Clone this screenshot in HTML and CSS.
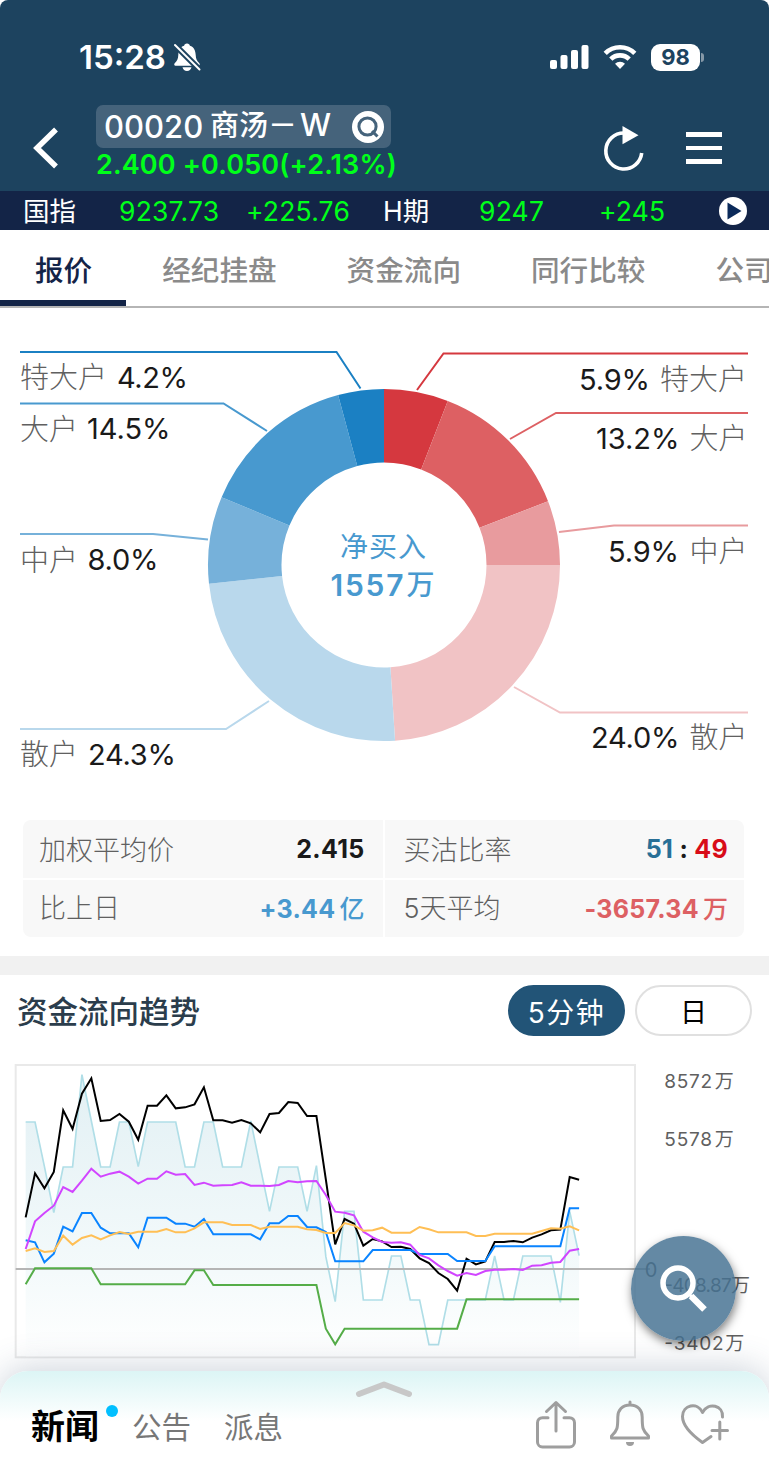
FILE: index.html
```html
<!DOCTYPE html>
<html lang="zh-Hans">

<head>
    <meta charset="utf-8">
    <meta name="viewport" content="width=device-width, initial-scale=1.0" />
    <title>00020 商汤－W</title>
    <link rel="stylesheet" href="styles.css">
</head>

<body>
    <header class="top">
        <div class="status">
            <span class="time">15:28</span>
            <svg class="mute" width="28" height="30" viewBox="0 0 28 30">
                <path fill="#fff" d="M14 1.5c-1.800 0-2.600 1-2.900 2.200C7 5 5.500 8.500 5.300 13c-.2 4-1.200 6-3.600 8.300-.9.900-.5 2.400.8 2.400h23c1.300 0 1.700-1.500.8-2.400-2.400-2.300-3.400-4.300-3.600-8.300-.2-4.500-1.700-8-5.800-9.300-.3-1.200-1.100-2.200-2.900-2.200zM9.500 25.300h9c-.5 2.200-2.200 3.700-4.500 3.700s-4-1.500-4.500-3.700z" />
                <path stroke="#1d435f" stroke-width="6" d="M1 2l26 26" />
                <path stroke="#fff" stroke-width="2" stroke-linecap="round" d="M2 3l24.500 24.500" />
            </svg>
            <div class="status-right">
                <svg width="39" height="26" viewBox="0 0 39 26" fill="#fff">
                    <rect x="0" y="16" width="7" height="9" rx="2" />
                    <rect x="10.500" y="11" width="7" height="14" rx="2" />
                    <rect x="21" y="6" width="7" height="19" rx="2" />
                    <rect x="31.500" y="1" width="7" height="24" rx="2" />
                </svg>
                <svg width="34" height="26" viewBox="0 0 34 26" fill="none" stroke="#fff" stroke-width="4.600">
                    <path d="M2.200 9.300a21 21 0 0 1 29.600 0" />
                    <path d="M7.800 15.200a13 13 0 0 1 18.400 0" />
                    <path fill="#fff" stroke="none" d="M17 25l-5-5.200a7 7 0 0 1 10 0z" />
                </svg>
                <div class="battery">98</div>
            </div>
        </div>
        <div class="stock">
            <svg class="back" width="26" height="42" viewBox="0 0 26 42" fill="none" stroke="#fff" stroke-width="5.500">
                <path d="M23 2.500L4 21l19 18.500" />
            </svg>
            <div class="quote">
                <div class="name">
                    <span class="code">00020</span><span class="cname">商汤－<i>W</i></span>
                    <svg width="32" height="32" viewBox="0 0 32 32">
                        <circle cx="16" cy="16" r="16" fill="#fff" />
                        <circle cx="15.500" cy="15.500" r="8.600" fill="none" stroke="#45637b" stroke-width="3" />
                        <path stroke="#45637b" stroke-width="3" d="M20 20l5.500 5.500" />
                    </svg>
                </div>
                <div class="price">2.400 +0.050(+2.13%)</div>
            </div>
            <svg class="refresh" width="42" height="48" viewBox="0 0 42 48">
                <path fill="none" stroke="#fff" stroke-width="3.600" d="M21 8A18 18 0 1 0 38.700 28" />
                <path fill="#fff" d="M19.500 1l16 9.300-16 9z" />
            </svg>
            <div class="menu"><i></i><i></i><i></i></div>
        </div>
    </header>

    <div class="ticker">
        <span class="t1">国指</span>
        <span class="t2 up">9237.73</span>
        <span class="t3 up">+225.76</span>
        <span class="t4">H期</span>
        <span class="t5 up">9247</span>
        <span class="t6 up">+245</span>
        <svg width="28" height="28" viewBox="0 0 28 28">
            <circle cx="14" cy="14" r="14" fill="#fff" />
            <path fill="#0b2a5a" d="M8.500 5.500l14 8.500-14 8.500z" />
        </svg>
    </div>

    <nav class="tabs">
        <a class="on">报价</a>
        <a>经纪挂盘</a>
        <a>资金流向</a>
        <a>同行比较</a>
        <a>公司</a>
    </nav>

    <section class="flow">
        <svg class="donut" width="769" height="512" viewBox="0 308 769 512">
            <g id="ring" fill="none" stroke-width="73.500"></g>
            <g fill="none" stroke-width="2">
                <path stroke="#1b80c3" d="M20 352H336.500L360.500 388.500" />
                <path stroke="#4899cf" d="M20 403.500H223.500L267 431" />
                <path stroke="#76b1da" d="M20 534H153L208 539.500" />
                <path stroke="#b9d8ec" d="M20 729H226L269 701" />
                <path stroke="#d5383f" d="M748 353.500H443.500L417 390" />
                <path stroke="#dd6063" d="M748 413H556L510 439" />
                <path stroke="#e89b9e" d="M748 525.500H614L559 532" />
                <path stroke="#f1c3c5" d="M748 712.500H560L514 687" />
            </g>
            <g class="label">
                <text x="20" y="388">特大户</text>
                <text x="20" y="439.500">大户</text>
                <text x="20" y="570.500">中户</text>
                <text x="20" y="765">散户</text>
                <text x="660" y="390">特大户</text>
                <text x="689.500" y="449">大户</text>
                <text x="689.500" y="562">中户</text>
                <text x="689.500" y="748">散户</text>
            </g>
            <g class="pct">
                <text x="117" y="387.500" textLength="71">4.2%</text>
                <text x="87" y="439" textLength="83.500">14.5%</text>
                <text x="87.500" y="570" textLength="71">8.0%</text>
                <text x="88" y="764.500" textLength="88">24.3%</text>
                <text x="579" y="389.500" textLength="71">5.9%</text>
                <text x="596" y="448.500" textLength="83.500">13.2%</text>
                <text x="608" y="561.500" textLength="71">5.9%</text>
                <text x="591" y="747.500" textLength="88.500">24.0%</text>
            </g>
            <g class="net">
                <text x="340" y="557" textLength="86">净买入</text>
                <text class="num" x="330.500" y="595.500" textLength="73">1557</text>
                <text class="wan" x="406.500" y="595">万</text>
            </g>
        </svg>

        <div class="stats">
            <div><span>加权平均价</span><b>2.415</b></div>
            <div><span>买沽比率</span><b><em class="buy">51</em> : <em class="sell">49</em></b></div>
            <div><span>比上日</span><b class="blue">+3.44<small>亿</small></b></div>
            <div><span>5天平均</span><b class="red">-3657.34<small>万</small></b></div>
        </div>
    </section>

    <section class="trend">
        <div class="trend-head">
            <h2>资金流向趋势</h2>
            <button class="pill on">5分钟</button>
            <button class="pill">日</button>
        </div>
        <svg class="chart" width="769" height="320" viewBox="0 0 2307 960">
            <defs>
                <linearGradient id="area" gradientUnits="userSpaceOnUse" x1="0" y1="70" x2="0" y2="922">
                    <stop offset="0" stop-color="#e2f0f4" />
                    <stop offset=".7" stop-color="#f4fafb" />
                    <stop offset="1" stop-color="#fff" />
                </linearGradient>
            </defs>
            <rect x="47" y="45" width="1858" height="877" fill="none" stroke="#e9e9e9" stroke-width="6" />
            <g id="lines" fill="none" stroke-width="6" stroke-linejoin="miter"></g>
            <g class="axis">
                <text x="1993" y="114" textLength="143">8572</text><text x="2144" y="114">万</text>
                <text x="1993" y="288" textLength="143">5578</text><text x="2144" y="288">万</text>
                <text class="zero" x="1934" y="680">0</text>
                <text x="1993" y="725" textLength="202">-408.87</text><text x="2193" y="725">万</text>
                <text x="1993" y="900" textLength="178">-3402</text><text x="2176" y="900">万</text>
            </g>
        </svg>
    </section>

    <button class="find">
        <svg width="50" height="50" viewBox="0 0 50 50" fill="none" stroke="#fff">
            <circle cx="19" cy="19" r="15" stroke-width="5.500" />
            <path stroke-width="3" d="M29 29l5 5" />
            <path stroke-width="6.500" d="M32 32l13.500 13.500" />
        </svg>
    </button>

    <footer class="sheet">
        <svg class="grip" width="58" height="18" viewBox="0 0 58 18" fill="none" stroke="#c8c8c8" stroke-width="6" stroke-linecap="round" stroke-linejoin="round">
            <path d="M4 14l25-9.500L54 14" />
        </svg>
        <div class="news">
            <a class="on">新闻</a>
            <a>公告</a>
            <a>派息</a>
        </div>
        <div class="tools">
            <svg width="42" height="50" viewBox="0 0 42 50">
                <path d="M13 18.700H7.500a5 5 0 0 0-5 5V43a5 5 0 0 0 5 5h27a5 5 0 0 0 5-5V23.700a5 5 0 0 0-5-5H29M21 32V4M11.500 12.500L21 3.500l9.500 9" />
            </svg>
            <svg width="42" height="50" viewBox="0 0 42 50">
                <path d="M21 3v3M21 6C13 6 8.800 11.500 8.800 18c0 11-.3 13.500-6.300 19v2h37v-2c-6-5.500-6.300-8-6.300-19C33.200 11.500 29 6 21 6z" />
                <path fill="#9e9e9e" stroke="none" d="M17 43h8a4 4 0 0 1-8 0z" />
            </svg>
            <svg width="50" height="50" viewBox="0 0 50 50">
                <path d="M31 37.500L22.500 43.500C12 36 2.500 27 2.500 17.500c0-11.500 15-15 20-4 6-11 21-7 20 4.500M32 31.500h15.500M39.800 23v17" />
            </svg>
        </div>
    </footer>

    <script>
        // 环图，从顶部顺时针
        var parts = [
            [5.9, '#d5383f'], [13.2, '#dd6063'], [5.9, '#e89b9e'], [24.0, '#f1c3c5'],
            [24.3, '#b9d8ec'], [8.0, '#76b1da'], [14.5, '#4899cf'], [4.2, '#1b80c3']
        ];

        function at(percent) {
            var a = percent / 100 * Math.PI * 2;
            return (384 + 139.25 * Math.sin(a)).toFixed(2) + ' ' + (565 - 139.25 * Math.cos(a)).toFixed(2);
        }
        var ring = '';
        var start = 0;
        parts.forEach(function (p) {
            ring += '<path stroke="' + p[1] + '" d="M' + at(start) + 'A139.25 139.25 0 0 1 ' + at(start + p[0]) + '"/>';
            start += p[0];
        });
        document.getElementById('ring').innerHTML = ring;

        // 走势，每5分钟一点
        var price = [216, 216, 350, 488, 351, 351, 74, 213, 351, 351, 216, 216, 350, 216, 216, 216, 216, 351, 351, 216,
            216, 351, 351, 351, 213, 350, 484, 351, 351, 351, 484, 347, 620, 755, 484, 484, 750, 750, 750, 618,
            618, 750, 750, 884, 884, 750, 750, 750, 750, 750, 618, 750, 750, 618, 618, 618, 618, 757, 484, 617];
        var total = [502, 370, 415, 366, 181, 237, 131, 85, 213, 210, 192, 215, 269, 167, 167, 136, 175, 172, 163, 112,
            211, 211, 218, 210, 220, 247, 192, 189, 156, 159, 198, 198, 388, 583, 507, 521, 587, 567, 574, 591,
            590, 597, 625, 639, 669, 687, 722, 626, 643, 634, 576, 576, 573, 577, 563, 553, 541, 539, 381, 389];
        var big = [571, 577, 637, 611, 530, 544, 489, 489, 533, 550, 550, 550, 592, 503, 503, 503, 521, 521, 530, 507,
            553, 553, 553, 553, 553, 568, 520, 520, 498, 498, 531, 532, 546, 634, 634, 634, 634, 600, 600, 600,
            600, 600, 612, 612, 612, 612, 633, 633, 633, 633, 589, 589, 589, 589, 589, 589, 589, 589, 475, 475];
        var small = [597, 514, 489, 467, 411, 426, 392, 356, 380, 371, 365, 380, 401, 386, 386, 364, 374, 372, 405, 398,
            407, 406, 405, 397, 407, 407, 408, 405, 393, 397, 394, 393, 435, 485, 488, 496, 545, 562, 576, 578,
            577, 584, 615, 625, 646, 663, 677, 669, 675, 663, 659, 659, 657, 660, 647, 646, 638, 636, 602, 597];
        var mid = [603, 595, 606, 603, 557, 584, 564, 556, 568, 556, 546, 552, 545, 545, 545, 537, 547, 547, 535, 517,
            517, 517, 525, 525, 525, 537, 530, 530, 530, 530, 538, 540, 549, 549, 519, 526, 542, 541, 533, 548,
            548, 548, 531, 538, 547, 547, 547, 547, 558, 558, 551, 551, 551, 551, 551, 543, 535, 536, 529, 541];
        var huge = [703, 655, 655, 655, 655, 655, 655, 655, 703, 703, 703, 703, 703, 703, 703, 703, 703, 703, 661, 661,
            705, 705, 705, 705, 705, 705, 705, 705, 705, 705, 705, 705, 836, 883, 836, 836, 836, 836, 836, 836,
            836, 836, 836, 836, 836, 836, 836, 748, 748, 748, 748, 748, 748, 748, 748, 748, 748, 748, 748, 748];

        function points(arr) {
            return arr.map((y, i) => (77 + i * 28.14).toFixed(1) + ',' + y).join(' ');
        }
        function line(arr, color) {
            return '<polyline stroke="' + color + '" points="' + points(arr) + '"/>';
        }
        document.getElementById('lines').innerHTML =
            '<polygon fill="url(#area)" points="77,919 ' + points(price) + ' 1737,919"/>' +
            line(price, '#b0dee7').replace('<polyline', '<polyline stroke-width="5"') +
            '<path stroke="#b5b5b5" d="M47 657H1950"/>' +
            line(total, '#000') + line(big, '#0a84ff') + line(small, '#d145ff') +
            line(mid, '#ffbf55') + line(huge, '#55ad48');
    </script>
</body>

</html>
```
FILE: styles.css
```css
* {
    box-sizing: border-box;
}

body {
    position: relative;
    margin: 0;
    height: 1463px;
    overflow: hidden;
    background: #fff;
    font-family: Inter, "Noto Sans CJK SC", sans-serif;
    color: #222;
}

svg {
    display: block;
    flex: none;
}

button {
    border: none;
    padding: 0;
    font-family: inherit;
}

/* 顶部 */
.top {
    height: 191px;
    background: #1d435f;
    border-radius: 8px 8px 0 0;
    color: #fff;
}

.status {
    display: flex;
    align-items: center;
    height: 105px;
    padding: 9px 69px 0 79px;
}

.time {
    width: 94px;
    font-size: 33px;
    font-weight: 600;
    white-space: nowrap;
}

.status-right {
    display: flex;
    align-items: center;
    gap: 14px;
    margin-left: auto;
}

.battery {
    position: relative;
    width: 49px;
    height: 27px;
    border-radius: 9px;
    background: #fff;
    color: #1d435f;
    font-size: 22px;
    line-height: 27px;
    font-weight: 700;
    text-align: center;
}

.battery::after {
    content: "";
    position: absolute;
    right: -4px;
    top: 9px;
    width: 3px;
    height: 9px;
    border-radius: 0 3px 3px 0;
    background: #8598a7;
}

.stock {
    display: flex;
    height: 86px;
    padding-left: 33px;
}

.back {
    margin-top: 22px;
}

.quote {
    width: 310px;
    margin-left: 37px;
}

.name {
    display: flex;
    align-items: center;
    width: 295px;
    height: 43px;
    padding: 0 7px 0 8px;
    border-radius: 7px;
    background: #45637b;
    font-size: 29px;
    line-height: 40px;
    font-weight: 500;
    white-space: nowrap;
}

.code {
    width: 106px;
    font-size: 31px;
}

.cname {
    padding-bottom: 3px;
}

.cname i {
    margin-left: 3px;
    font-size: 31px;
    font-style: normal;
}

.name svg {
    margin-left: auto;
}

.price {
    height: 34px;
    line-height: 34px;
    font-size: 27px;
    font-weight: 600;
    letter-spacing: .15px;
    color: #00ff1a;
    white-space: nowrap;
}

.refresh {
    margin: 20px 0 0 197px;
}

.menu {
    display: flex;
    flex-direction: column;
    gap: 9px;
    margin: 27px 0 0 41px;
}

.menu i {
    width: 36px;
    height: 4.500px;
    background: #fff;
}

/* 指数 */
.ticker {
    display: flex;
    align-items: center;
    height: 39px;
    padding-left: 23px;
    background: #132447;
    color: #fff;
    font-size: 26.500px;
    line-height: 36px;
    white-space: nowrap;
}

.ticker .up {
    padding-top: 1px;
    letter-spacing: .2px;
    color: #00ff1a;
}

.t1 {
    width: 96px;
}

.t2 {
    width: 127px;
}

.t3 {
    width: 137px;
}

.t4 {
    width: 96px;
}

.t5 {
    width: 120px;
}

.t6 {
    width: 120px;
}

/* 标签 */
.tabs {
    display: flex;
    gap: 70px;
    height: 78px;
    padding-left: 35px;
    border-bottom: 2px solid #b5b5b5;
    overflow: hidden;
    font-size: 28.600px;
    line-height: 81px;
    font-weight: 500;
    color: #8a8a8a;
    white-space: nowrap;
}

.tabs .on {
    position: relative;
    color: #132447;
}

.tabs .on::after {
    content: "";
    position: absolute;
    left: -35px;
    top: 70px;
    width: 126px;
    height: 6px;
    background: #132447;
}

/* 资金分布 */
.label {
    font-size: 29px;
    font-weight: 300;
    fill: #606060;
}

.pct {
    font-size: 29px;
    fill: #1a1a1a;
}

.net {
    font-size: 28px;
    fill: #4899cf;
}

.net .num {
    font-size: 30px;
    font-weight: 600;
}

.net .wan {
    font-size: 28px;
    font-weight: 500;
}

.stats {
    display: grid;
    grid-template-columns: 1fr 1fr;
    gap: 2px;
    width: 721px;
    margin: 0 0 19px 23px;
    border-radius: 8px;
    overflow: hidden;
}

.stats div {
    display: flex;
    align-items: center;
    justify-content: space-between;
    height: 57.500px;
    padding: 0 16px 0 16px;
    background: #f8f8f8;
}

.stats div:nth-child(odd) {
    padding-right: 18px;
}

.stats div:nth-child(even) {
    padding-left: 19px;
}

.stats div:nth-child(n+3) {
    padding-bottom: 3px;
}

.stats span {
    font-size: 27px;
    font-weight: 300;
    color: #606060;
}

.stats b {
    font-size: 25px;
    font-weight: 700;
    letter-spacing: .3px;
    color: #1a1a1a;
}

.stats small {
    margin-left: 4px;
    font-size: 25px;
    font-weight: 500;
    letter-spacing: 0;
}

.stats em {
    font-style: normal;
}

.stats .blue {
    color: #4899cf;
}

.stats .red {
    color: #dd6063;
}

.stats .buy {
    color: #286f96;
}

.stats .sell {
    color: #d80c18;
}

/* 趋势 */
.trend {
    border-top: 19px solid #f1f1f1;
}

.trend-head {
    display: flex;
    align-items: center;
    gap: 10px;
    height: 75px;
    padding: 0 17px 4px;
}

h2 {
    flex: 1;
    margin: -2px 0 0;
    font-size: 30.500px;
    font-weight: 500;
    color: #2b3d4c;
}

.pill {
    width: 117px;
    height: 51px;
    border: 2px solid #e0e0e0;
    border-radius: 26px;
    background: #fff;
    font-size: 27px;
    color: #000;
}

.pill.on {
    border-color: #225477;
    background: #225477;
    color: #fff;
    font-size: 28px;
    letter-spacing: 1.500px;
}

.axis {
    font-size: 57px;
    fill: #606060;
}

.axis .zero {
    font-size: 60px;
}

.find {
    position: absolute;
    left: 630.500px;
    top: 1236px;
    display: flex;
    align-items: flex-start;
    width: 105px;
    height: 105px;
    padding: 28px 0 0 28px;
    border-radius: 50%;
    background: rgba(69, 113, 146, .83);
    box-shadow: 1px 4px 10px rgba(0, 0, 0, .5);
}

/* 底部 */
.sheet {
    position: absolute;
    left: 0;
    bottom: 0;
    display: flex;
    justify-content: space-between;
    width: 769px;
    height: 92px;
    padding: 0 39px 0 31px;
    border-radius: 28px 28px 0 0;
    background: linear-gradient(#dcf5f5, #fff 50px);
    box-shadow: 0 -3px 34px rgba(60, 85, 115, .25);
}

.grip {
    position: absolute;
    left: 355px;
    top: 9px;
}

.news {
    display: flex;
    gap: 33px;
    font-size: 29.500px;
    line-height: 112px;
    color: #777;
}

.news .on {
    position: relative;
    font-size: 34px;
    font-weight: 700;
    color: #000;
}

.news .on::after {
    content: "";
    position: absolute;
    right: -19px;
    top: 34px;
    width: 12px;
    height: 12px;
    border-radius: 50%;
    background: #00bfff;
}

.tools {
    display: flex;
    gap: 32px;
    padding-top: 28px;
    fill: none;
    stroke: #9e9e9e;
    stroke-width: 3;
    stroke-linecap: round;
    stroke-linejoin: round;
}

.tools svg:last-child {
    margin-left: -3px;
}
```
